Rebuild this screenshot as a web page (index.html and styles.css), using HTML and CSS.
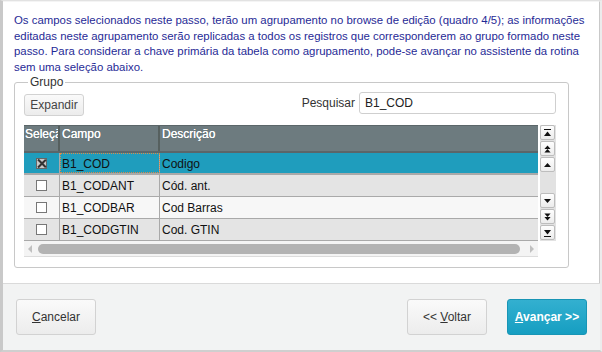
FILE: index.html
```html
<!DOCTYPE html>
<html lang="pt">
<head>
<meta charset="utf-8">
<link rel="stylesheet" href="styles.css">
</head>
<body>
<div class="window">
  <div class="content">
    <p class="intro">Os campos selecionados neste passo, terão um agrupamento no browse de edição (quadro 4/5); as informações editadas neste agrupamento serão replicadas a todos os registros que corresponderem ao grupo formado neste passo. Para considerar a chave primária da tabela como agrupamento, pode-se avançar no assistente da rotina sem uma seleção abaixo.</p>
    <fieldset class="group">
      <legend>Grupo</legend>
      <div class="toolbar">
        <button class="btn small">Expandir</button>
        <label class="search">Pesquisar <span class="input">B1_COD</span></label>
      </div>
      <div class="browse">
        <div class="gridwrap">
          <div class="grid">
            <div class="row head">
              <div class="c hsel">Seleção</div>
              <div class="c campo">Campo</div>
              <div class="c desc">Descrição</div>
            </div>
            <div class="row selected">
              <div class="c sel"><span class="chk on"></span></div>
              <div class="c campo focus">B1_COD</div>
              <div class="c desc">Codigo</div>
            </div>
            <div class="row odd">
              <div class="c sel"><span class="chk"></span></div>
              <div class="c campo">B1_CODANT</div>
              <div class="c desc">Cód. ant.</div>
            </div>
            <div class="row even">
              <div class="c sel"><span class="chk"></span></div>
              <div class="c campo">B1_CODBAR</div>
              <div class="c desc">Cod Barras</div>
            </div>
            <div class="row odd">
              <div class="c sel"><span class="chk"></span></div>
              <div class="c campo">B1_CODGTIN</div>
              <div class="c desc">Cod. GTIN</div>
            </div>
          </div>
          <div class="hscroll">
            <span class="arr left"></span>
            <span class="thumb"></span>
            <span class="arr right"></span>
          </div>
        </div>
        <div class="vscroll">
          <span class="sb"><svg viewBox="0 0 9 8"><rect x="1" y="0" width="7" height="1"/><path d="M1 7 L4.5 2.5 L8 7Z"/></svg></span>
          <span class="sb"><svg viewBox="0 0 9 9"><path d="M1 4.5 L4.5 0.5 L8 4.5Z M1 8.5 L4.5 4.5 L8 8.5Z"/></svg></span>
          <span class="sb"><svg viewBox="0 0 9 8"><path d="M1 6 L4.5 2 L8 6Z"/></svg></span>
          <span class="vgap"></span>
          <span class="sb"><svg viewBox="0 0 9 8"><path d="M1 2 L4.5 6 L8 2Z"/></svg></span>
          <span class="sb"><svg viewBox="0 0 9 9"><path d="M1 0.5 L4.5 4.5 L8 0.5Z M1 4.5 L4.5 8.5 L8 4.5Z"/></svg></span>
          <span class="sb"><svg viewBox="0 0 9 8"><path d="M1 1 L4.5 5.5 L8 1Z"/><rect x="1" y="7" width="7" height="1"/></svg></span>
        </div>
      </div>
    </fieldset>
  </div>
  <div class="footer">
    <button class="btn big"><u>C</u>ancelar</button>
    <span class="spacer"></span>
    <button class="btn big">&lt;&lt; <u>V</u>oltar</button>
    <button class="btn big primary"><u>A</u>vançar &gt;&gt;</button>
  </div>
</div>
</body>
</html>
```

FILE: styles.css
```css
* { box-sizing: border-box; }
html, body { margin: 0; padding: 0; background: #ececec; }
body { font-family: "Liberation Sans", Arial, sans-serif; font-size: 12px; }

.window {
  width: 602px;
  height: 352px;
  border-left: 3px solid #c9c9c9;
  border-top: 1px solid #e2e2e2;
  border-right: 2px solid #ececec;
  border-bottom: 2px solid #cfcfcf;
  display: flex;
  flex-direction: column;
  background: #fff;
}

.content {
  height: 282px;
  background: #fff;
  border-top: 1px solid #f4f4f4;
  border-right: 1px solid #c9c9c9;
  padding: 11px 14px 0 11px;
}

.intro {
  margin: 0;
  color: #1f2a96;
  line-height: 15.6px;
  font-size: 11.4px;
}

.group {
  margin: 0 17px 0 0;
  border: 1px solid #c8c8c8;
  border-radius: 3px;
  padding: 8px 12px 12px 9px;
  height: 193px;
}
.group legend {
  padding: 0 2px;
  margin-left: 4px;
  color: #333;
  font-size: 12px;
}

.toolbar {
  display: flex;
  justify-content: space-between;
  align-items: center;
  height: 22px;
  margin-top: -5px;
}

.btn {
  font-family: "Liberation Sans", Arial, sans-serif;
  font-size: 12px;
  color: #444;
  background: linear-gradient(#fafafa, #ececec);
  border: 1px solid #d2d2d2;
  border-radius: 3px;
  cursor: default;
}
.btn.small {
  width: 60px;
  height: 22px;
  padding: 0;
  margin-top: 3px;
}
.search {
  display: flex;
  align-items: center;
  gap: 4px;
  color: #333;
}
.input {
  width: 197px;
  height: 22px;
  border: 1px solid #cfcfcf;
  border-radius: 3px;
  padding: 3px 5px;
  color: #222;
  background: #fff;
}

.browse {
  margin-top: 11px;
  display: flex;
  gap: 2px;
}
.gridwrap {
  width: 514px;
  display: flex;
  flex-direction: column;
}
.grid { display: flex; flex-direction: column; }
.row {
  display: grid;
  grid-template-columns: 36px 100px 1fr;
  height: 22px;
  border-bottom: 1px solid #a9a9a9;
}
.row .c {
  padding: 4px 2px 0;
  color: #111;
  white-space: nowrap;
  overflow: hidden;
  border-right: 1px solid #a9a9a9;
  min-width: 0;
}
.row .c.desc { border-right: none; }
.row.head {
  height: 28px;
  background: #6d7b7f;
  border-bottom: 2px solid #5b6669;
  border-top: 1px solid #5b6669;
}
.row.head .c {
  display: block;
  color: #fff;
  font-weight: normal;
  font-size: 12px;
  padding-top: 1px;
  border-right: 2px solid #56605f;
  text-shadow: 0 0 0.4px #fff;
}
.row.head .c.hsel { padding-left: 1px; padding-right: 0; text-overflow: clip; }
.row.head .c.desc { border-right: none; }
.row.selected { background: #1f9dbd; border-bottom: 2px solid #a9a9a9; }
.row.selected .c { color: #111; }
.row.selected .c.focus { outline: 1px dotted #d98a4a; outline-offset: -1px; }
.row.odd { background: #e4e4e4; }
.row.even { background: #f7f7f7; }

.c.sel { display: flex; justify-content: center; }
.chk {
  width: 11px;
  height: 11px;
  border: 1px solid #777;
  background: #fff;
  margin-top: 1px;
  position: relative;
}
.chk.on { background: #c8c8c8; border-color: #666; }
.chk.on::before, .chk.on::after {
  content: "";
  position: absolute;
  left: 4px;
  top: -1px;
  width: 1.5px;
  height: 11px;
  background: #333;
  transform: rotate(45deg);
}
.chk.on::after { transform: rotate(-45deg); }

.hscroll {
  height: 16px;
  display: flex;
  align-items: center;
  background: #f4f4f4;
  border-bottom: 1px solid #dcdcdc;
  padding: 0 4px;
  gap: 6px;
}
.thumb {
  flex: 1;
  height: 10px;
  border-radius: 5px;
  background: #b3b3b3;
}
.arr { width: 0; height: 0; border-top: 4px solid transparent; border-bottom: 4px solid transparent; }
.arr.left { border-right: 4px solid #c0c0c0; }
.arr.right { border-left: 4px solid #c0c0c0; margin-left: 4px; }

.vscroll {
  width: 16px;
  height: 116px;
  display: flex;
  flex-direction: column;
  background: #e2e2e2;
}
.vgap { flex: 1; }
.sb {
  width: 15px;
  height: 15px;
  margin-bottom: 1px;
  border: 1px solid #bdbdbd;
  border-radius: 2px;
  background: linear-gradient(#fefefe, #ececec);
  display: flex;
  align-items: center;
  justify-content: center;
}
.sb svg { width: 9px; height: 8px; fill: #111; }

.footer {
  flex: 1;
  background: #f2f3f3;
  border-top: 1px solid #dadada;
  display: flex;
  align-items: flex-start;
  padding: 15px 13px 0 13px;
  gap: 20px;
}
.spacer { flex: 1; }
.btn.big {
  width: 80px;
  height: 36px;
  padding: 0;
  font-size: 12px;
  color: #333;
}
.btn.primary {
  background: linear-gradient(#33b0d0, #169ec1);
  border-color: #1895b5;
  color: #fff;
  font-weight: bold;
}
```
